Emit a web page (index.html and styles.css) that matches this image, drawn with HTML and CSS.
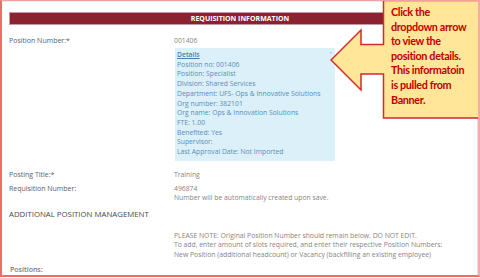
FILE: index.html
```html
<!DOCTYPE html>
<html lang="en">
<head>
    <meta charset="UTF-8">
    <meta name="viewport" content="width=device-width, initial-scale=1.0">
    <link rel="stylesheet" href="styles.css">
    <title>Requisition Information</title>
</head>
<body>
    <div class="frame">
        <div class="page">
            <div class="section-head">REQUISITION INFORMATION</div>

            <div class="row row-position">
                <div class="label">Position Number:*</div>
                <div class="value">
                    <div>001406</div>
                    <div class="details">
                        <div class="details-title">
                            <a href="#">Details</a>
                            <span class="caret">&#710;</span>
                        </div>
                        <div>Position no: 001406</div>
                        <div>Position: Specialist</div>
                        <div>Division: Shared Services</div>
                        <div>Department: UFS- Ops &amp; Innovative Solutions</div>
                        <div>Org number: 382101</div>
                        <div>Org name: Ops &amp; Innovation Solutions</div>
                        <div>FTE: 1.00</div>
                        <div>Benefited: Yes</div>
                        <div>Supervisor:</div>
                        <div>Last Approval Date: Not Imported</div>
                    </div>
                </div>
            </div>

            <div class="row row-title">
                <div class="label">Posting Title:*</div>
                <div class="value">Training</div>
            </div>

            <div class="row row-req">
                <div class="label">Requisition Number:</div>
                <div class="value">
                    <div>496874</div>
                    <div>Number will be automatically created upon save.</div>
                </div>
            </div>

            <h3 class="sub-head">ADDITIONAL POSITION MANAGEMENT</h3>

            <div class="row row-note">
                <div class="label"></div>
                <div class="value">
                    <div>PLEASE NOTE: Original Position Number should remain below. DO NOT EDIT.</div>
                    <div>To add, enter amount of slots required, and enter their respective Position Numbers:</div>
                    <div>New Position (additional headcount) or Vacancy (backfilling an existing employee)</div>
                </div>
            </div>

            <div class="positions">Positions:</div>
        </div>

        <div class="callout">
            <svg class="callout-shape" width="152" height="124" viewBox="330 -2 152 124">
                <polygon points="383.5,0.5 479,0.5 479,118 383.5,118 383.5,74 361,74 361,90 331,60 361,30 361,44.5 383.5,44.5"
                         fill="#ffe699" stroke="#d42a2a" stroke-width="1.5"/>
            </svg>
            <div class="callout-text">Click the<br>dropdown arrow<br>to view the<br>position details.<br>This informatoin<br>is pulled from<br>Banner.</div>
        </div>
    </div>
</body>
</html>
```

FILE: styles.css
```css
body {
    margin: 0;
    font-family: 'Open Sans', 'Segoe UI', sans-serif;
    background-color: white;
}

.frame {
    position: relative;
    box-sizing: border-box;
    width: 480px;
    height: 277px;
    border-left: 2px solid #f26a6a;
    border-top: 1px solid #f5a0a0;
    border-bottom: 2px solid #f26a6a;
    border-right: 2px solid #f7aaaa;
    overflow: hidden;
}

.page {
    box-sizing: border-box;
    height: 100%;
    padding: 10px 6px 0 7px;
    border-top: 1px solid #ececec;
    border-right: 1px solid #e2e2e2;
}

.section-head {
    height: 13px;
    box-sizing: border-box;
    border: 1px solid #c79aa3;
    background-color: #8b2232;
    color: white;
    font-size: 7px;
    font-weight: 700;
    line-height: 11px;
    text-align: center;
}

.row {
    display: flex;
    font-size: 7px;
    line-height: 10px;
}

.label {
    width: 165px;
    color: #5e5e5e;
}

.value {
    color: #858585;
    font-size: 6.8px;
}

.row-position {
    margin-top: 11px;
}

.details {
    width: 160px;
    box-sizing: border-box;
    margin: 2px 0 0 1px;
    padding: 2px 3px 4px 2px;
    background-color: #dcf0fa;
    color: #5a8fb5;
    line-height: 9.7px;
}

.details-title {
    display: flex;
    justify-content: space-between;
}

.details-title a {
    color: #4a7fa8;
    font-weight: 600;
    text-decoration: underline;
}

.caret {
    color: #9aa8b4;
    font-size: 7px;
}

.row-title {
    margin-top: 9px;
}

.row-req {
    margin-top: 4px;
    line-height: 9.5px;
}

.sub-head {
    margin: 5px 0 0 0;
    font-size: 7.8px;
    font-weight: 400;
    line-height: 12px;
    color: #484848;
}

.row-note {
    margin-top: 11px;
    line-height: 9.7px;
}

.positions {
    margin: 5px 0 0 1px;
    font-size: 7px;
    font-weight: 600;
    line-height: 10px;
    color: #7a7a7a;
}

.callout {
    position: absolute;
    left: 328px;
    top: -3px;
    width: 152px;
    height: 124px;
}

.callout-shape {
    display: block;
}

.callout-text {
    position: absolute;
    left: 61px;
    top: 7px;
    font-family: Lato, 'Open Sans', sans-serif;
    font-size: 10.8px;
    font-weight: 700;
    letter-spacing: -0.35px;
    line-height: 14.6px;
    color: #c00000;
    white-space: nowrap;
}
```
